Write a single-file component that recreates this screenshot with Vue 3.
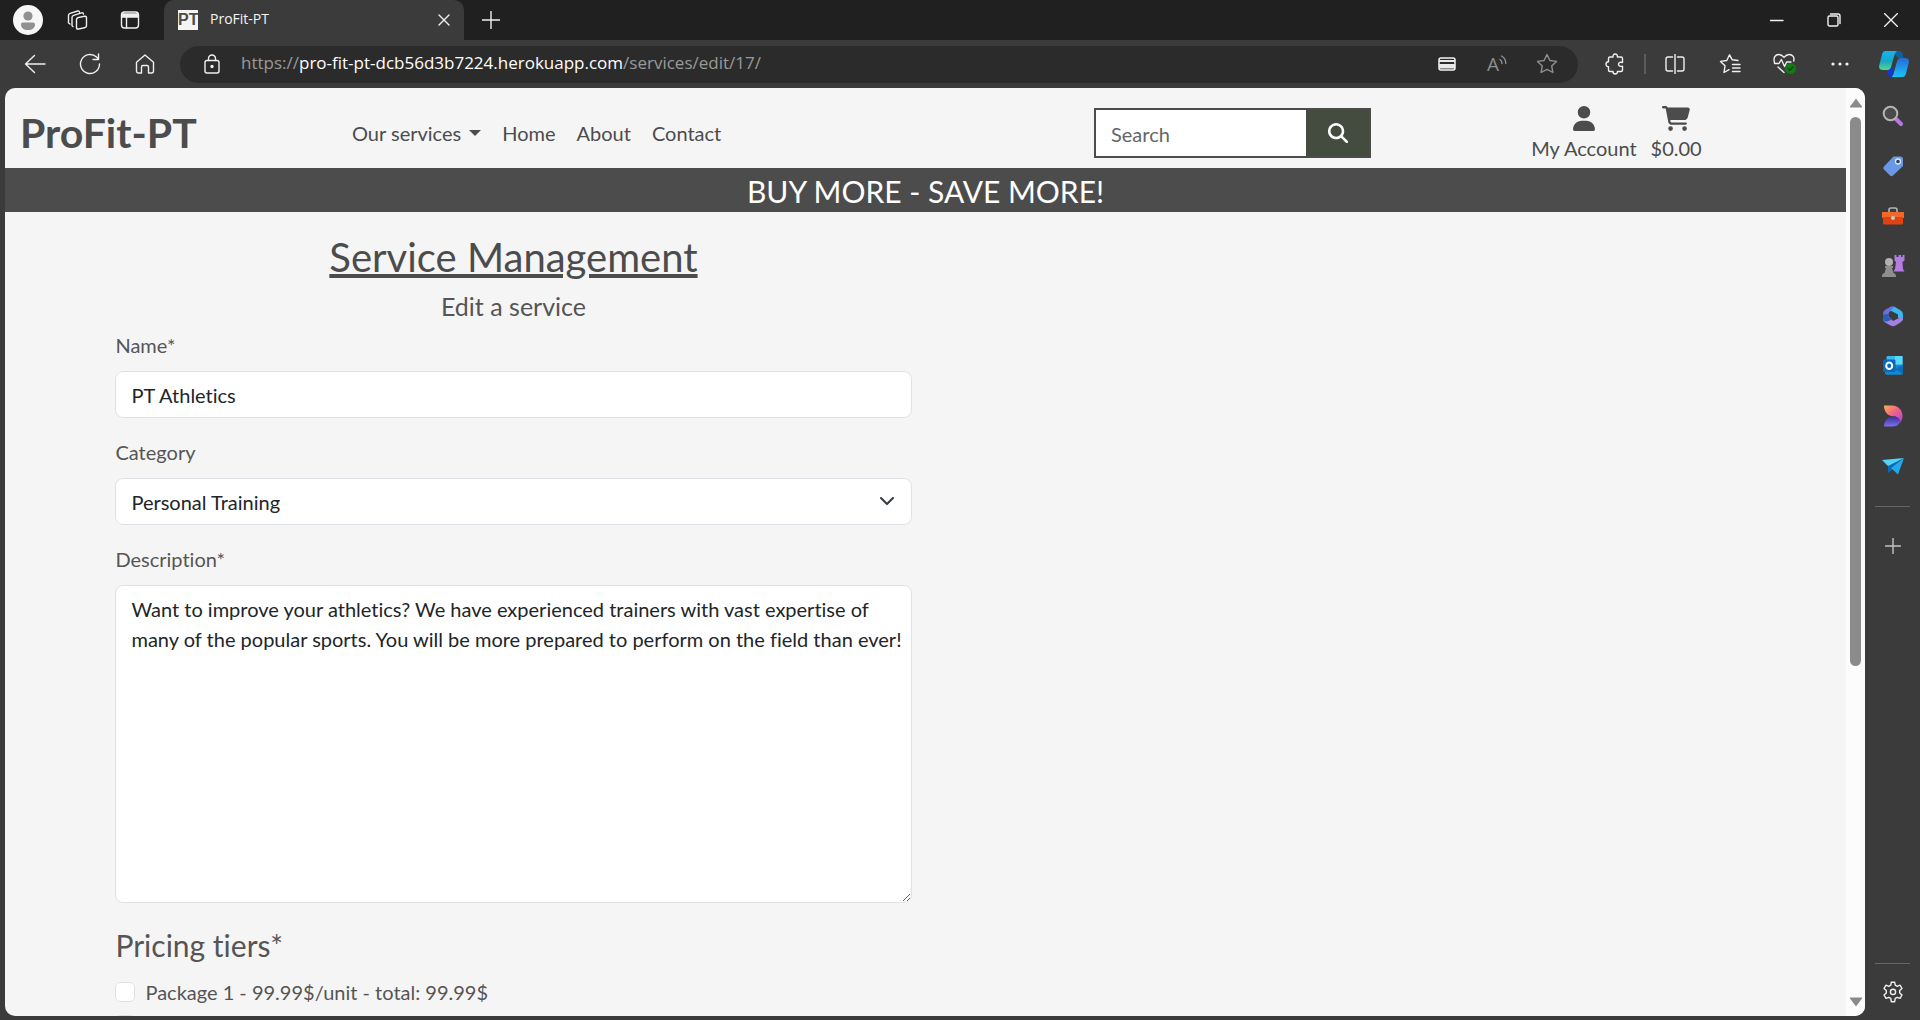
<script setup>
import { ref } from 'vue'

const query = ref('')
const name = ref('PT Athletics')
const category = ref('Personal Training')
const description = ref(
  'Want to improve your athletics? We have experienced trainers with vast expertise of many of the popular sports. You will be more prepared to perform on the field than ever!'
)
const tiers = ref([
  { id: 'tier-1', label: 'Package 1 - 99.99$/unit - total: 99.99$', checked: false },
  { id: 'tier-2', label: '', checked: false }
])
</script>

<template>
  <div class="window">
    <header class="titlebar">
      <button class="tb profile" aria-label="Profile">
        <svg width="30" height="30" viewBox="0 0 30 30"><circle cx="15" cy="15" r="15" fill="#f7f7f7" /><circle cx="15" cy="11" r="4.6" fill="#919191" /><path d="M10 17.500h10c1.300 0 2 .8 2 2 0 3.500-2.500 5.500-7 5.500s-7-2-7-5.500c0-1.200.7-2 2-2z" fill="#919191" /></svg>
      </button>
      <button class="tb" aria-label="Workspaces">
        <svg class="line" width="22" height="22" viewBox="0 0 22 22"><rect x="9.500" y="7.500" width="10" height="11.500" rx="2" transform="skewY(-12) translate(0 3.500)" /><path d="M6 17.500l-1-.8V8.500c0-1 .7-1.900 1.700-2.200l7.800-2.500c1-.3 1.800.2 2 1.200M3 15l-1.500-1V6.500c0-1 .7-1.900 1.700-2.200L10.500 2c1-.3 1.800.2 2 1.200" /></svg>
      </button>
      <button class="tb last" aria-label="Tab actions">
        <svg class="line" width="20" height="20" viewBox="0 0 20 20"><rect x="1.500" y="2" width="17" height="16" rx="3" /><path d="M2 4h16v3H2z" fill="#f0f0f0" /><path d="M6.500 7v11" /></svg>
      </button>
      <div class="tab">
        <span class="favicon">PT</span>
        <span class="tab-title">ProFit-PT</span>
        <button class="plain tab-close" aria-label="Close tab"><svg class="line" width="12" height="12" viewBox="0 0 12 12"><path d="M1 1l10 10M11 1L1 11" /></svg></button>
      </div>
      <button class="tb new-tab" aria-label="New tab"><svg class="line" width="18" height="18" viewBox="0 0 18 18"><path d="M9 0v18M0 9h18" /></svg></button>
      <div class="controls">
        <button aria-label="Minimize"><svg class="line" width="14" height="14" viewBox="0 0 14 14"><path d="M0 7.500h13" /></svg></button>
        <button aria-label="Restore"><svg class="line" width="14" height="14" viewBox="0 0 14 14"><rect x="1" y="3" width="10" height="10" rx="1.500" /><path d="M3.500 1H11c1.300 0 2 .8 2 2v7.500" /></svg></button>
        <button aria-label="Close"><svg class="line" width="14" height="14" viewBox="0 0 14 14"><path d="M.5.5l13 13M13.500.5l-13 13" /></svg></button>
      </div>
    </header>

    <div class="toolbar">
      <button aria-label="Back"><svg class="line" width="22" height="20" viewBox="0 0 22 20"><path d="M21 10H2M10.500 1.500L1.500 10l9 8.500" /></svg></button>
      <button aria-label="Refresh"><svg class="line" width="22" height="22" viewBox="0 0 22 22"><path d="M20.500 11a9.500 9.500 0 1 1-3-6.900L19.500 6M19.500 1v5.500H14" /></svg></button>
      <button aria-label="Home"><svg class="line" width="20" height="20" viewBox="0 0 20 20"><path d="M1.500 8.300L10 1l8.500 7.300V17c0 1.200-.7 2-2 2h-3v-6c0-1-.5-1.500-1.500-1.500H8c-1 0-1.500.5-1.500 1.500v6h-3c-1.300 0-2-.8-2-2z" /></svg></button>

      <div class="address">
        <svg class="line lock" width="18" height="20" viewBox="0 0 18 20"><rect x="2" y="6.500" width="14" height="12.500" rx="2" /><path d="M5.500 6.500V4.500a3.500 3.500 0 0 1 7 0v2" /><circle cx="9" cy="12.500" r="1" fill="#f0f0f0" /></svg>
        <span class="url">https://<b>pro-fit-pt-dcb56d3b7224.herokuapp.com</b>/services/edit/17/</span>
        <button aria-label="Saved cards"><svg width="18" height="14" viewBox="0 0 18 14"><rect x="1" y="1" width="16" height="12" rx="2" fill="none" stroke="#f4f4f4" stroke-width="1.500" /><path d="M1 3h16v2H1zM1 7h16v4.500H1z" fill="#e8e8e8" /></svg></button>
        <button class="dim read-aloud" aria-label="Read aloud"><span>A</span><svg class="line" width="8" height="20" viewBox="0 0 8 20"><path d="M1 5.500c1.300 1 2 2.300 2 4M2.500 2c2.800 1.500 4.300 4 4.300 7.500" /></svg></button>
        <button class="dim" aria-label="Add to favorites"><svg class="line" width="22" height="22" viewBox="0 0 22 22"><path d="M11 1.500l2.900 6 6.600.9-4.800 4.600 1.200 6.500-5.900-3.100-5.900 3.100L6.300 13 1.500 8.400l6.600-.9z" /></svg></button>
      </div>

      <button aria-label="Extensions"><svg class="line" width="20" height="22" viewBox="0 0 20 22"><path d="M8 4c-.3-1.800.7-3 2.200-3s2.500 1.200 2.200 3H16c1 0 1.500.5 1.500 1.500v4c-2-.7-4 0-4 1.800s2 2.500 4 1.800V17c0 1-.5 1.500-1.500 1.500h-3.600c.2 1.600-.8 2.500-2.200 2.500S8 20.100 8 18.500H5c-1 0-1.500-.5-1.500-1.500v-3.200C2 13.800 1 12.700 1 11.300s1-2.500 2.500-2.500V5.500C3.500 4.500 4 4 5 4z" /></svg></button>
      <span class="divider"></span>
      <button aria-label="Split screen"><svg class="line" width="20" height="20" viewBox="0 0 20 20"><path d="M7.500 3H3C1.700 3 1 3.800 1 5v10c0 1.200.7 2 2 2h4.500M12.500 3H17c1.300 0 2 .8 2 2v10c0 1.200-.7 2-2 2h-4.500M10 0v20" /></svg></button>
      <button aria-label="Favorites"><svg class="line" width="22" height="20" viewBox="0 0 22 20"><path d="M19 6.500l-5.700-.7L10.500.8 7.800 6.500l-6.300.9L6 11.800 5 18.500l5-2.800M13.500 10.500H21M13.500 14H21M13.500 17.500H21" /></svg></button>
      <button aria-label="Browser essentials"><svg class="line" width="24" height="22" viewBox="0 0 24 22"><path d="M1.500 9.500C0 4.500 2.300 1.500 5.800 1.500c2.200 0 3.700 1 5.200 2.900 1.500-1.900 3-2.900 5.200-2.900 3.500 0 5.500 3 4.500 6.500M1.500 10.500H6l2.300-4 3.300 7 2-4.500H18M5 14l6 5.500" /><circle cx="17.500" cy="15.500" r="5.500" fill="#107c10" stroke="none" /><path d="M15 15.500l1.800 1.800 3-3.300" stroke="#173f17" /></svg></button>
      <button aria-label="More"><svg width="18" height="4" viewBox="0 0 18 4"><g fill="#f4f4f4"><circle cx="2" cy="2" r="1.600" /><circle cx="9" cy="2" r="1.600" /><circle cx="16" cy="2" r="1.600" /></g></svg></button>
      <button class="copilot" aria-label="Copilot">
        <svg width="30" height="28" viewBox="0 0 30 28">
          <defs>
            <linearGradient id="cpA" x1="0" y1="0" x2="0" y2="1"><stop offset="0" stop-color="#12b5f1" /><stop offset=".55" stop-color="#18a7c4" /><stop offset="1" stop-color="#59d884" /></linearGradient>
            <linearGradient id="cpB" x1="0" y1="0" x2="0" y2="1"><stop offset="0" stop-color="#2769d8" /><stop offset="1" stop-color="#1ac4fa" /></linearGradient>
          </defs>
          <path d="M14 1h6c2 0 3 1 3.500 3l1 4h-6z" fill="#08639d" />
          <path d="M8 18h7l-2 9c-3 0-4-1-5-5z" fill="#1737c8" />
          <path d="M6.500 1H18c-1.500 1-2.200 3-2.800 5l-3 10.500c-.7 2.500-2 3.500-4 3.500H4c-3 0-4.500-1.500-3.700-5L3 4.500C3.600 2 4.700 1 6.500 1z" fill="url(#cpA)" />
          <path d="M22 8h4c3 0 4.500 1.500 3.700 5L27 23.500c-.6 2.500-1.800 3.500-3.500 3.500H12.500c1.500-1 2-3 2.500-5l3-10.500C18.700 9 20 8 22 8z" fill="url(#cpB)" />
        </svg>
      </button>
    </div>

    <div class="body">
      <div class="viewport">
        <div class="page">
          <nav class="site-nav">
            <a class="brand" href="#">ProFit-PT</a>
            <div class="links">
              <a href="#" class="dropdown">Our services</a>
              <a href="#">Home</a>
              <a href="#">About</a>
              <a href="#">Contact</a>
            </div>
            <form class="search" role="search" @submit.prevent>
              <input v-model="query" type="text" placeholder="Search" aria-label="Search" />
              <button aria-label="Submit search"><svg width="20" height="20" viewBox="0 0 512 512"><path fill="#fff" d="M416 208c0 45.900-14.900 88.300-40 122.700L502.600 457.400c12.500 12.500 12.500 32.800 0 45.300s-32.800 12.500-45.300 0L330.700 376C296.300 401.100 253.900 416 208 416C93.100 416 0 322.900 0 208S93.100 0 208 0S416 93.100 416 208zM208 352a144 144 0 1 0 0-288 144 144 0 1 0 0 288z" /></svg></button>
            </form>
            <div class="account">
              <a href="#"><svg width="22" height="25" viewBox="0 0 448 512"><path d="M224 256A128 128 0 1 0 224 0a128 128 0 1 0 0 256zm-45.700 48C79.800 304 0 383.800 0 482.300C0 498.700 13.300 512 29.700 512l388.600 0c16.400 0 29.700-13.300 29.700-29.700C448 383.800 368.200 304 269.700 304l-91.400 0z" /></svg>My Account</a>
              <a href="#"><svg width="28" height="25" viewBox="0 0 576 512"><path d="M0 24C0 10.700 10.700 0 24 0H69.500c22 0 41.500 12.800 50.600 32h411c26.300 0 45.500 25 38.600 50.400l-41 152.300c-8.500 31.400-37 53.300-69.500 53.300H170.700l5.400 28.500c2.200 11.300 12.100 19.500 23.600 19.500H488c13.300 0 24 10.700 24 24s-10.700 24-24 24H199.700c-34.600 0-64.300-24.600-70.700-58.500L77.400 54.500c-.7-3.800-4-6.500-7.900-6.500H24C10.700 48 0 37.300 0 24zM128 464a48 48 0 1 1 96 0 48 48 0 1 1 -96 0zm336-48a48 48 0 1 1 0 96 48 48 0 1 1 0-96z" /></svg>$0.00</a>
            </div>
          </nav>
          <div class="banner">BUY MORE - SAVE MORE!</div>

          <main class="content">
            <form class="service-form" @submit.prevent>
              <h2>Service Management</h2>
              <h5>Edit a service</h5>

              <div class="field">
                <label for="name">Name*</label>
                <input id="name" v-model="name" type="text" class="control" />
              </div>
              <div class="field">
                <label for="category">Category</label>
                <div class="select-wrap">
                  <select id="category" v-model="category" class="control">
                    <option>Personal Training</option>
                  </select>
                  <svg class="chevron" width="16" height="16" viewBox="0 0 16 16"><path d="M2 5l6 6 6-6" fill="none" stroke="#343a40" stroke-width="2" stroke-linecap="round" stroke-linejoin="round" /></svg>
                </div>
              </div>
              <div class="field">
                <label for="description">Description*</label>
                <textarea id="description" v-model="description" class="control" spellcheck="false"></textarea>
              </div>

              <fieldset>
                <legend>Pricing tiers*</legend>
                <div v-for="tier in tiers" :key="tier.id" class="check">
                  <input :id="tier.id" v-model="tier.checked" type="checkbox" />
                  <label :for="tier.id">{{ tier.label }}</label>
                </div>
              </fieldset>
            </form>
          </main>
        </div>
        <div class="scrollbar">
          <svg width="14" height="10" viewBox="0 0 14 10"><path d="M7 0.500L13 8.500c.3.600 0 1-.6 1H1.600c-.6 0-.9-.4-.6-1z" fill="#8b8b8b" /></svg>
          <div class="track"><div class="thumb"></div></div>
          <svg width="14" height="10" viewBox="0 0 14 10"><path d="M7 9.500L13 1.500c.3-.6 0-1-.6-1H1.600c-.6 0-.9.4-.6 1z" fill="#8b8b8b" /></svg>
        </div>
      </div>

      <aside class="sidebar">
        <button aria-label="Search"><svg width="22" height="22" viewBox="0 0 22 22"><path d="M14 14l5 5" stroke="#b777ec" stroke-width="4" stroke-linecap="round" /><circle cx="8.500" cy="8.500" r="6.800" fill="#4a4a4a" stroke="#b5b5b0" stroke-width="2" /></svg></button>
        <button aria-label="Shopping"><svg width="22" height="22" viewBox="0 0 22 22"><path d="M11.500 1.500h7c1.500 0 2.500 1 2.500 2.500v7L11 20.500c-1 .9-2 .9-3 0l-6-6c-.9-1-.9-2 0-3z" fill="#6a98e4" /><circle cx="16" cy="6.500" r="2.500" fill="#28466f" stroke="#e4e8ee" stroke-width="1.300" /></svg></button>
        <button aria-label="Tools"><svg width="24" height="20" viewBox="0 0 24 20"><path d="M8 7V4c0-1.200.8-2 2-2h4c1.200 0 2 .8 2 2v3" fill="none" stroke="#b4b4b4" stroke-width="1.600" /><path d="M1 6h22v6H1z" fill="#f3672a" /><path d="M2 11h20v6c0 1-.7 1.500-1.500 1.500h-17C2.700 18.500 2 18 2 17z" fill="#e04310" /><circle cx="12" cy="12" r="2" fill="#c8c8c8" /></svg></button>
        <button aria-label="Games"><svg width="24" height="24" viewBox="0 0 24 24"><path d="M13.500 1h2v2h2V1h2.500v2h1.500V1h2v5.500l-2 1.500.5 7 1.500 2.500H12.500L14 15l1-7-1.500-1.500z" fill="#b47be0" /><circle cx="8" cy="8" r="4" fill="#b1b1b1" /><path d="M4 12h8v2h-1l1.500 5c2 .5 2.500 1.500 2.500 4H1c0-2.500.5-3.500 2.500-4L5 14H4z" fill="#8e8e8e" /></svg></button>
        <button aria-label="Microsoft 365"><svg width="22" height="22" viewBox="0 0 22 22"><path d="M9 1.500L4 4.300C2 5.500 1 7 1 9.500V15l5.500-1.500V9.500c0-1.500.8-2.500 2-3.200L14 3c-2-1.700-3.500-2.200-5-1.500z" fill="#6a6fdb" /><path d="M12 1.500l6 3.500c2 1.200 3 2.700 3 5v5.500l-5-2.800V9.500L8.500 5.500 11 3z" fill="#38b8ed" /><path d="M1 14.500l5.500-3.300L11 16l5-2.500 4.800-1.500c.2 3-.8 4.500-2.800 5.700l-4.500 2.700c-1.700 1-3.300 1-5 0L4 18c-1.800-1-2.800-2-3-3.500z" fill="#a57fe4" /><path d="M1 9.500V13c0 2 .8 3.300 2.500 3.500 1.500.2 2.700-.3 4-1l3-1.500-4-2V9z" fill="#275fb3" /></svg></button>
        <button aria-label="Outlook"><svg width="22" height="22" viewBox="0 0 22 22"><path d="M6 1h13c1 0 1.500.5 1.500 1.500V11h-16V2.500C4.500 1.500 5 1 6 1z" fill="#37b9ed" /><path d="M13 1h7.500v9H13z" fill="#58d9fb" /><path d="M3 10l18-.5V18c0 1-.7 1.700-1.700 1.700H5c-1.200 0-2-.7-2-1.700z" fill="#1687d1" /><path d="M21 10v9L13 14z" fill="#0d6db7" /><rect x="1" y="4.500" width="12.500" height="12.500" rx="1.500" fill="#0769bd" /><ellipse cx="7.200" cy="10.700" rx="3" ry="3.300" fill="none" stroke="#fff" stroke-width="2" /></svg></button>
        <button aria-label="Designer"><svg width="22" height="22" viewBox="0 0 22 22"><defs><linearGradient id="dsA" x1="0" y1="0" x2="1" y2="1"><stop offset="0" stop-color="#ffb04e" /><stop offset=".45" stop-color="#f06488" /><stop offset="1" stop-color="#b638dc" /></linearGradient><linearGradient id="dsB" x1="0" y1="1" x2="0" y2="0"><stop offset="0" stop-color="#806ff0" /><stop offset="1" stop-color="#34309b" /></linearGradient></defs><path d="M2 .5h8C16 .5 20.500 5 20.500 11c0 4-2 7-5 8.500l-1.500-8C7 12 2 8 2 .5z" fill="url(#dsA)" /><path d="M2 21.500c0-6 4-10 9-10s8 2.500 7 5.500c-1.200 3-4 4.500-8 4.500z" fill="url(#dsB)" /></svg></button>
        <button aria-label="Drop"><svg width="22" height="18" viewBox="0 0 22 18"><path d="M0 3l22-2-15 9z" fill="#55d3f8" /><path d="M22 1L6 9v7l4-3z" fill="#0e69b2" /><path d="M22 1L9 11l7 6.500z" fill="#27a6e8" /></svg></button>
        <span class="rule"></span>
        <button class="add" aria-label="Customize sidebar"><svg class="line soft" width="16" height="16" viewBox="0 0 16 16"><path d="M8 .5v15M.5 8h15" /></svg></button>
        <span class="rule bottom"></span>
        <button class="settings" aria-label="Settings"><svg class="line" width="22" height="22" viewBox="0 0 22 22"><path d="M9.300 1.200h3.400l.5 3 2 1.100 2.800-1.100 2 3.300-2.300 2v2.500l2.300 2-2 3.300-2.800-1-2 1.100-.5 3.300H9.300l-.5-3.300-2-1.100-2.800 1-2-3.300 2.300-2V9.500L2 7.500l2-3.300 2.800 1.100 2-1.100z" /><circle cx="11" cy="10.900" r="2.600" /></svg></button>
      </aside>
    </div>
  </div>
</template>

<style>
body {
  margin: 0;
  background: #3b3b3b;
}
</style>

<style scoped>
* {
  box-sizing: border-box;
}
.window {
  display: flex;
  flex-direction: column;
  height: 100vh;
  overflow: hidden;
  background: #3b3b3b;
  font-family: "Open Sans", "Noto Sans", sans-serif;
}
button {
  display: flex;
  align-items: center;
  justify-content: center;
  flex: none;
  border: 0;
  padding: 0;
  background: none;
  color: inherit;
  font: inherit;
}
svg {
  display: block;
  flex: none;
}
.line {
  fill: none;
  stroke: #f0f0f0;
  stroke-width: 1.4;
  stroke-linecap: round;
  stroke-linejoin: round;
}
.soft {
  stroke: #c4c4c4;
}

/* Title bar */
.titlebar {
  display: flex;
  align-items: stretch;
  flex: none;
  height: 40px;
  padding: 0 1px 0 3px;
  background: #202020;
}
.tb {
  width: 50px;
}
.last {
  width: 54px;
  margin-right: 7px;
}
.tab {
  display: flex;
  align-items: center;
  width: 300px;
  padding: 0 12px 0 14px;
  border-radius: 10px 10px 0 0;
  background: #3b3b3b;
  color: #f4f4f4;
}
.favicon {
  width: 20px;
  height: 20px;
  background: #f4f4f4;
  color: #4c4c4c;
  font: bold 16px/20px "Liberation Sans Narrow", "Liberation Sans", sans-serif;
  text-align: center;
}
.tab-title {
  flex: 1;
  margin-left: 12px;
  font-size: 14px;
  line-height: 20px;
  padding-bottom: 2px;
}
.tab-close {
  width: 16px;
  height: 40px;
}
.new-tab {
  width: 54px;
}
.controls {
  display: flex;
  margin-left: auto;
}
.controls button {
  width: 57px;
}

/* Toolbar */
.toolbar {
  display: flex;
  align-items: center;
  flex: none;
  height: 48px;
  padding-left: 7px;
}
.toolbar button {
  width: 55px;
  height: 37px;
}
.toolbar .copilot {
  width: 53px;
}
.address {
  display: flex;
  align-items: center;
  flex: 1;
  height: 37px;
  margin: 0 9px 0 8px;
  padding: 0 6px 0 23px;
  border-radius: 19px;
  background: #2b2b2b;
}
.address button {
  width: 50px;
}
.dim .line {
  stroke: #8f8f8f;
}
.read-aloud {
  color: #8f8f8f;
  font-size: 19px;
  line-height: 28px;
}
.url {
  flex: 1;
  margin-left: 20px;
  padding-bottom: 2px;
  color: #9a9a9a;
  font-size: 17px;
  line-height: 24px;
  white-space: nowrap;
}
.url b {
  color: #fff;
  font-weight: 400;
}
.divider {
  width: 2px;
  height: 20px;
  margin: 0 1px 0 2px;
  background: #5c5c5c;
}

/* Page area */
.body {
  display: flex;
  flex: 1;
  min-height: 0;
}
.viewport {
  display: flex;
  flex: 1;
  min-width: 0;
  margin: 0 0 4px 5px;
  overflow: hidden;
  border-radius: 10px;
  background: #f5f5f5;
}
.page {
  flex: 1;
  min-width: 0;
  overflow: hidden;
  color: #555;
  font: 20px/30px Lato, sans-serif;
  font-variant-ligatures: none;
}
.site-nav {
  display: grid;
  grid-template-columns: 347px 742fr 277px 475fr;
  align-items: center;
  height: 80px;
  padding-top: 10px;
}
.site-nav a {
  color: #4c4c4c;
  text-decoration: none;
}
.site-nav .brand {
  padding-left: 15px;
  font-size: 41px;
  font-weight: 700;
  line-height: 60px;
}
.links {
  display: flex;
  gap: 21px;
}
.links .dropdown::after {
  content: "";
  display: inline-block;
  margin-left: 8px;
  border: 6px solid transparent;
  border-top-color: #4c4c4c;
  border-bottom: 0;
  vertical-align: 5px;
}
.search {
  display: flex;
  height: 50px;
  border: 2px solid #4c4c4c;
}
.search input {
  flex: 1;
  min-width: 0;
  padding: 2px 15px 0;
  border: 0;
  background: #fff;
  color: #212529;
  font: inherit;
}
.search input::placeholder {
  color: #62666a;
  opacity: 1;
}
.search button {
  width: 63px;
  background: #444c3f;
}
.account {
  display: flex;
  justify-content: center;
  gap: 14px;
  padding: 2px 0 0 16px;
}
.account a {
  display: flex;
  flex-direction: column;
  align-items: center;
  gap: 2px;
}
.account svg {
  fill: #4c4c4c;
}
.banner {
  background: #4c4c4c;
  color: #fff;
  font-size: 30px;
  line-height: 44px;
  padding-top: 1px;
  height: 44px;
  text-align: center;
}
.content {
  padding: 21px 6% 0;
}
.service-form {
  width: calc(50% - 14px);
}
h2,
h5 {
  margin: 0;
  font-weight: 400;
  text-align: center;
}
h2 {
  margin-bottom: 10px;
  color: #4c4c4c;
  font-size: 40px;
  line-height: 48px;
  text-decoration: underline;
}
h5 {
  margin-bottom: 10px;
  font-size: 25px;
  line-height: 30px;
}
.field {
  display: flex;
  flex-direction: column;
  gap: 10px;
  margin-bottom: 20px;
}
.field label {
  height: 30px;
  line-height: 28px;
}
.control {
  display: block;
  width: 100%;
  height: 47px;
  padding: 8px 15px;
  border: 1px solid #dee2e6;
  border-radius: 8px;
  background: #fff;
  color: #212529;
  font: inherit;
  outline: 0;
}
select.control {
  appearance: none;
}
textarea.control {
  height: 318px;
  padding-right: 4px;
  resize: vertical;
}
.select-wrap {
  position: relative;
}
.chevron {
  position: absolute;
  top: 15px;
  right: 17px;
}
fieldset {
  margin: 0;
  padding: 0;
  border: 0;
}
legend {
  padding: 0;
  margin-bottom: 10px;
  font-size: 30px;
  line-height: 44px;
}
.check {
  display: flex;
  align-items: center;
  gap: 10px;
  height: 30px;
  margin-bottom: 3px;
}
.check input {
  appearance: none;
  width: 20px;
  height: 20px;
  margin: 0;
  border: 1px solid #dee2e6;
  border-radius: 5px;
  background: #fff;
}

/* Scrollbar */
.scrollbar {
  display: flex;
  flex-direction: column;
  align-items: center;
  flex: none;
  width: 19px;
  padding: 10px 0 9px;
  background: #fcfcfc;
}
.track {
  flex: 1;
  width: 11px;
  margin: 9px 0;
}
.thumb {
  height: 63%;
  border-radius: 6px;
  background: #8b8b8b;
}

/* Sidebar */
.sidebar {
  display: flex;
  flex-direction: column;
  align-items: center;
  flex: none;
  width: 55px;
  padding-top: 3px;
}
.sidebar button {
  width: 50px;
  height: 50px;
}
.rule {
  width: 35px;
  height: 1px;
  flex: none;
  margin: 15px 0 14px;
  background: #666;
}
.rule.bottom {
  margin: auto 0 3px;
}
.sidebar .settings {
  margin-bottom: 3px;
}
</style>
